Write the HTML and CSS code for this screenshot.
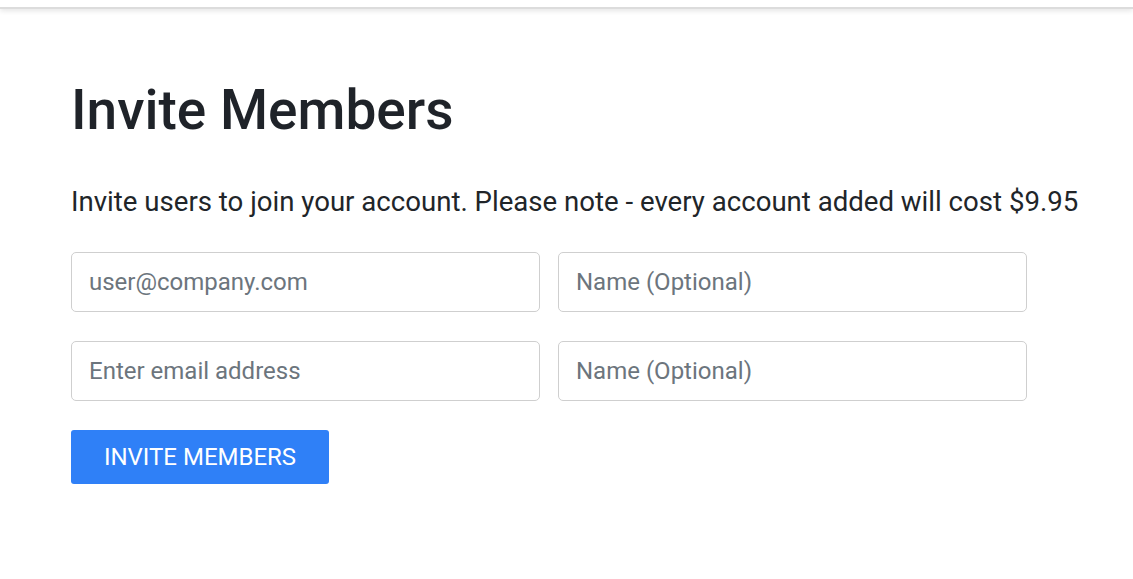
FILE: index.html
```html
<!DOCTYPE html>
<html>
<head>
<meta charset="utf-8">
<link rel="stylesheet" href="styles.css">
</head>
<body>
<div class="topbar"></div>
<main class="content">
  <h1 class="title">Invite Members</h1>
  <p class="note">Invite users to join your account. Please note - every account added will cost $9.95</p>
  <form class="form">
    <div class="row">
      <input class="field" type="text" placeholder="user@company.com">
      <input class="field" type="text" placeholder="Name (Optional)">
    </div>
    <div class="row">
      <input class="field" type="text" placeholder="Enter email address">
      <input class="field" type="text" placeholder="Name (Optional)">
    </div>
    <button class="btn" type="button">INVITE MEMBERS</button>
  </form>
</main>
</body>
</html>
```
FILE: styles.css
```css
html, body {
  margin: 0;
  padding: 0;
  background: #fff;
}
body {
  font-family: Roboto, "Liberation Sans", sans-serif;
  color: #212529;
}
.topbar {
  height: 9px;
  border-bottom: 2px solid #dcdcdc;
  box-shadow: 0 2px 5px rgba(0,0,0,0.10);
  box-sizing: border-box;
}
.content {
  padding: 0 0 0 71px;
}
.title {
  margin: 69px 0 0;
  font-size: 55px;
  font-weight: 500;
  line-height: 64px;
  color: #1f2329;
}
.note {
  margin: 43px 0 0;
  font-size: 27.6px;
  line-height: 34px;
  color: #212529;
}
.form {
  margin-top: 33px;
  display: flex;
  flex-direction: column;
  gap: 29px;
}
.row {
  display: flex;
  gap: 18px;
}
.field {
  width: 469px;
  height: 60px;
  box-sizing: border-box;
  border: 1px solid #cfcfcf;
  border-radius: 5px;
  padding: 0 17px;
  font-family: Roboto, "Liberation Sans", sans-serif;
  font-size: 24px;
  color: #495057;
  outline: none;
}
.field::placeholder {
  color: #6c757d;
}
.btn {
  align-self: flex-start;
  width: 258px;
  height: 54px;
  background: #2f80f7;
  border: none;
  border-radius: 3px;
  color: #fff;
  font-family: Roboto, "Liberation Sans", sans-serif;
  font-size: 24px;
  font-weight: 400;
  padding: 0;
}
```
